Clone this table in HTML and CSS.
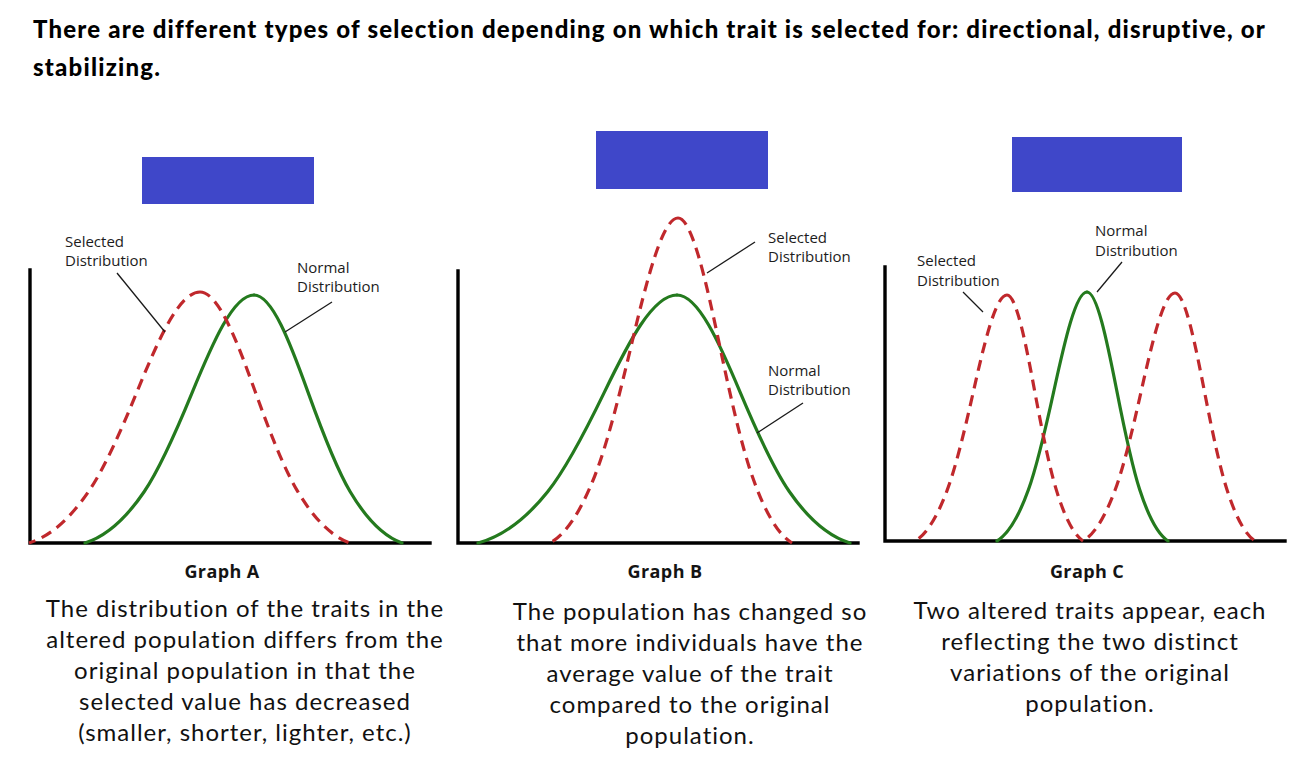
FILE: index.html
```html
<!DOCTYPE html>
<html lang="en">
<head>
<meta charset="utf-8">
<title>Types of selection</title>
<link rel="stylesheet" href="styles.css">
</head>
<body>
<p class="intro">There are different types of selection depending on which trait is selected for: directional, disruptive, or stabilizing.</p>

<div class="charts">
  <svg class="chart chart-a" width="445" height="470" viewBox="0 120 445 470">
    <defs>
      <path id="half" vector-effect="non-scaling-stroke" d="M0,1 C0.122,1 0.244,0.8087 0.366,0.6065 C0.4607,0.4496 0.5553,0.3017 0.65,0.2067 C0.7667,0.0897 0.8833,0.025 1,0"/>
    </defs>
    <rect class="mask" x="142" y="157" width="172" height="47"/>
    <path class="axis" d="M30,270 V543 H430"/>
    <use href="#half" class="green" transform="matrix(-169,0,0,-248,254,543)"/>
    <use href="#half" class="green" transform="matrix(148,0,0,-248,254,543)"/>
    <use href="#half" class="red" transform="matrix(-171,0,0,-251,200,543)"/>
    <use href="#half" class="red" transform="matrix(150,0,0,-251,200,543)"/>
    <line class="leader" x1="117" y1="273" x2="165" y2="332"/>
    <line class="leader" x1="332" y1="302" x2="285" y2="332"/>
    <text class="lbl" x="65" y="247">Selected</text>
    <text class="lbl" x="65" y="266">Distribution</text>
    <text class="lbl" x="297" y="273">Normal</text>
    <text class="lbl" x="297" y="292">Distribution</text>
    <text class="cap" x="222" y="578">Graph A</text>
  </svg>

  <svg class="chart chart-b" width="425" height="470" viewBox="445 120 425 470">
    <rect class="mask" x="596" y="131" width="172" height="58"/>
    <path class="axis" d="M458,271 V543 H858"/>
    <use href="#half" class="green" transform="matrix(-199,0,0,-248,677,543)"/>
    <use href="#half" class="green" transform="matrix(173,0,0,-248,677,543)"/>
    <use href="#half" class="red" transform="matrix(-128,0,0,-325,678,543)"/>
    <use href="#half" class="red" transform="matrix(114,0,0,-325,678,543)"/>
    <line class="leader" x1="755" y1="242" x2="707" y2="273"/>
    <line class="leader" x1="803" y1="403" x2="757" y2="433"/>
    <text class="lbl" x="768" y="243">Selected</text>
    <text class="lbl" x="768" y="262">Distribution</text>
    <text class="lbl" x="768" y="376">Normal</text>
    <text class="lbl" x="768" y="395">Distribution</text>
    <text class="cap" x="665" y="578">Graph B</text>
  </svg>

  <svg class="chart chart-c" width="421" height="470" viewBox="870 120 421 470">
    <rect class="mask" x="1012" y="137" width="170" height="55"/>
    <path class="axis" d="M885,267 V541 H1285"/>
    <use href="#half" class="green" transform="matrix(-90,0,0,-249,1087,541)"/>
    <use href="#half" class="green" transform="matrix(81,0,0,-249,1087,541)"/>
    <use href="#half" class="red" transform="matrix(-92,0,0,-246,1007,541)"/>
    <use href="#half" class="red" transform="matrix(76,0,0,-246,1007,541)"/>
    <use href="#half" class="red" transform="matrix(-92,0,0,-248,1175,541)"/>
    <use href="#half" class="red" transform="matrix(80,0,0,-248,1175,541)"/>
    <line class="leader" x1="963" y1="292" x2="983" y2="312"/>
    <line class="leader" x1="1122" y1="262" x2="1097" y2="292"/>
    <text class="lbl" x="917" y="266">Selected</text>
    <text class="lbl" x="917" y="286">Distribution</text>
    <text class="lbl" x="1095" y="236">Normal</text>
    <text class="lbl" x="1095" y="256">Distribution</text>
    <text class="cap" x="1087" y="578">Graph C</text>
  </svg>
</div>

<div class="descs">
  <p class="desc desc-a">The distribution of the traits in the<br>altered population differs from the<br>original population in that the<br>selected value has decreased<br>(smaller, shorter, lighter, etc.)</p>
  <p class="desc desc-b">The population has changed so<br>that more individuals have the<br>average value of the trait<br>compared to the original<br>population.</p>
  <p class="desc desc-c">Two altered traits appear, each<br>reflecting the two distinct<br>variations of the original<br>population.</p>
</div>
</body>
</html>
```

FILE: styles.css
```css
html, body {
  margin: 0;
  padding: 0;
  background: #ffffff;
  color: #000000;
  width: 1291px;
  height: 757px;
  overflow: hidden;
}

.intro {
  margin: 0;
  width: 1250px;
  height: 76px;
  padding: 10px 0 0 33px;
  font-family: "Lato", "Noto Sans", sans-serif;
  font-weight: 900;
  font-size: 24px;
  letter-spacing: 1.2px;
  line-height: 38px;
}

.charts {
  display: flex;
  margin-top: 34px;
}

.chart {
  display: block;
  flex: none;
}

.mask {
  fill: #3f47c9;
}

.axis {
  fill: none;
  stroke: #000000;
  stroke-width: 3.4;
  stroke-linecap: square;
}

.red {
  fill: none;
  stroke: #c0282c;
  stroke-width: 3.2;
  stroke-dasharray: 11 7;
}

.green {
  fill: none;
  stroke: #247a1e;
  stroke-width: 3.2;
  stroke-linecap: round;
}

.leader {
  stroke: #1a1a1a;
  stroke-width: 1.3;
}

.lbl {
  font-family: "Open Sans", "Noto Sans", sans-serif;
  font-size: 15px;
  fill: #1c1c1c;
}

.cap {
  font-family: "Open Sans", "Noto Sans", sans-serif;
  font-weight: 700;
  font-size: 18px;
  letter-spacing: 0.4px;
  fill: #141414;
  text-anchor: middle;
}

.descs {
  display: flex;
  padding-left: 20px;
  margin-top: 2px;
}

.desc {
  margin: 0;
  flex: none;
  text-align: center;
  white-space: nowrap;
  font-family: "Lato", "Noto Sans", sans-serif;
  font-weight: 400;
  font-size: 24px;
  letter-spacing: 1px;
  line-height: 31px;
  color: #111111;
}

.desc-a {
  width: 450px;
}

.desc-b {
  width: 440px;
  padding-top: 3px;
}

.desc-c {
  width: 360px;
  padding-top: 2px;
}
```
